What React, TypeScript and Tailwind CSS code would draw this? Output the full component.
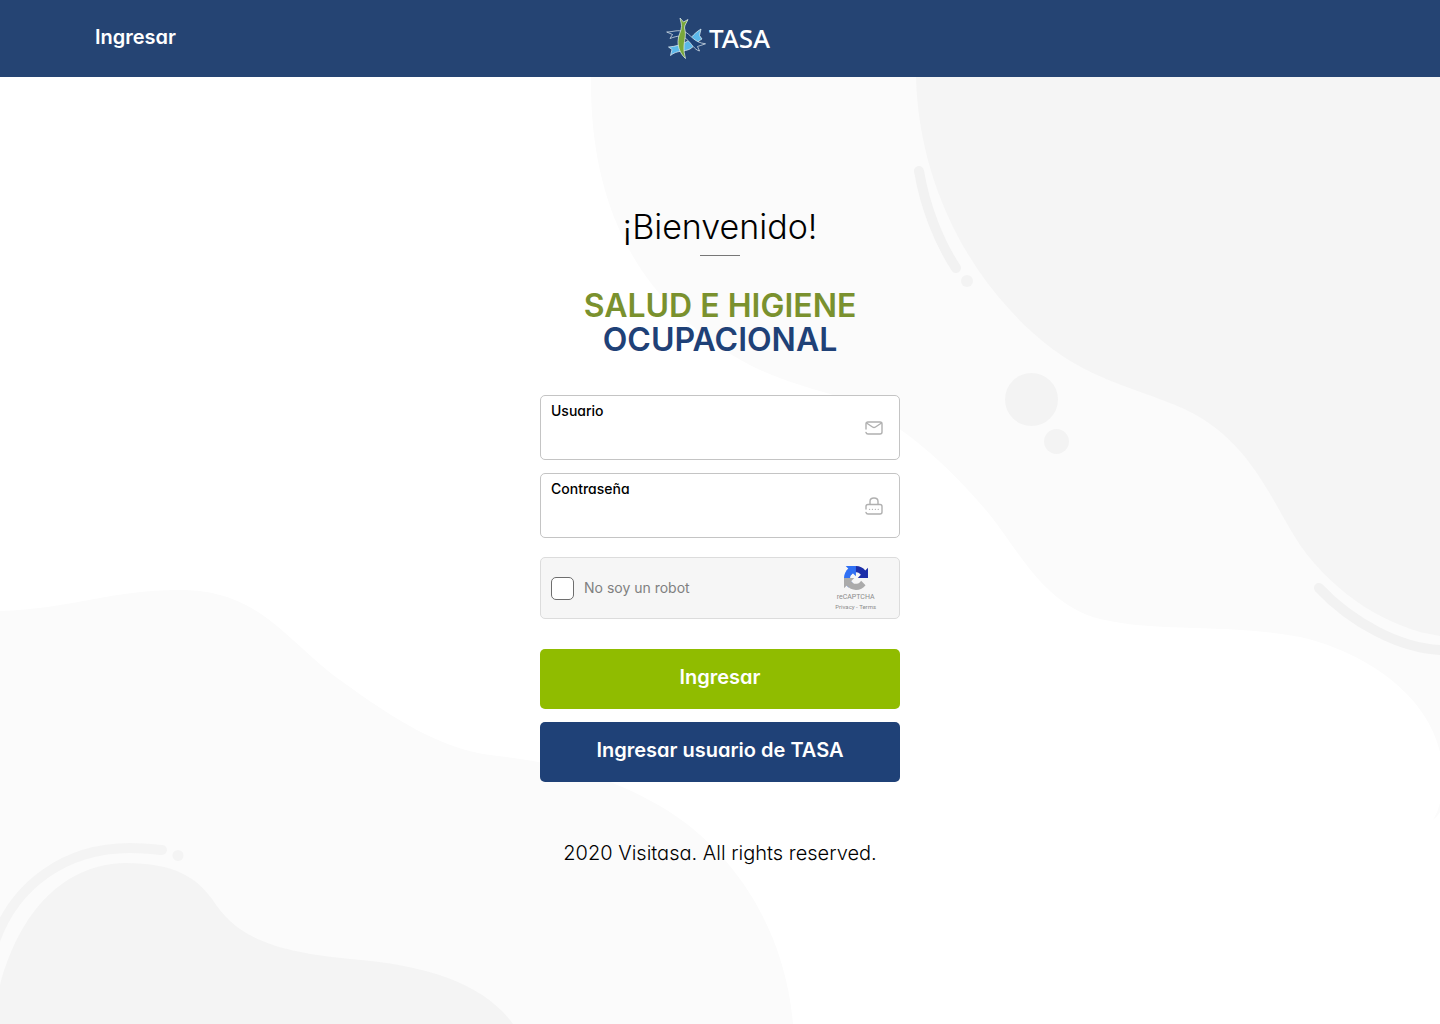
import { useState } from "react";

function Backdrop() {
  return (
    <svg
      aria-hidden="true"
      className="absolute inset-0 -z-10 h-full w-full"
      viewBox="0 77 1440 947"
      preserveAspectRatio="xMidYMid slice"
    >
      <path
        fill="#fbfbfb"
        d="M591 77C590 160 610 250 680 315C740 371 790 382 830 394C900 416 955 473 990 515C1020 553 1045 605 1100 619C1160 633 1225 623 1300 637C1370 653 1428 698 1440 752V77Z"
      />
      <path fill="#fbfbfb" d="M1440 803Q1438 812 1433 820Q1438 816 1440 812Z" />
      <path
        fill="#f5f5f5"
        d="M916 77C918 160 950 245 1010 310C1070 376 1120 382 1175 405C1250 435 1270 500 1300 545C1335 595 1390 629 1440 636V77Z"
      />
      <g fill="none" stroke="#f2f2f2" strokeWidth="10" strokeLinecap="round">
        <path d="M919 171C925 207 939 242 956 268" />
        <path d="M1319 588C1350 621 1400 650 1445 650" />
      </g>
      <g fill="#f3f3f3">
        <circle cx="967" cy="281" r="6" />
        <circle cx="1031.500" cy="399.500" r="26.500" />
        <circle cx="1056.500" cy="441.500" r="12.500" />
      </g>
      <path
        fill="#fbfbfb"
        d="M0 611C70 609 110 590 180 590C260 590 285 640 340 680C395 720 440 748 490 755C560 763 610 777 660 806C735 850 785 930 793 1024H0Z"
      />
      <path
        fill="#f4f4f4"
        d="M0 985C20 910 65 864 125 863C175 863 197 878 212 899C235 934 265 951 350 959C430 965 485 985 513 1024H0Z"
      />
      <path
        d="M-5 941C15 885 65 848 130 848C144 848 152 849 162 850"
        fill="none"
        stroke="#f4f4f4"
        strokeWidth="10"
        strokeLinecap="round"
      />
      <circle cx="178" cy="855.500" r="5.500" fill="#f4f4f4" />
    </svg>
  );
}

function TasaLogo() {
  return (
    <svg role="img" aria-label="TASA" width="108" height="44" viewBox="0 0 108 44">
      <g strokeWidth="0.700" stroke="#e8f0f4" strokeLinejoin="round">
        <path
          fill="#5bb8ea"
          d="M4.500 38.500L6 32.500L2.500 30C10 29.500 15 27.500 20 25C25 22.500 26 17.500 35 12L33.500 18.500L36 22C32 23.500 29 29 24 32C18 35 11 33 4.500 38.500Z"
        />
        <path
          fill="#1d4277"
          d="M0.700 15C7 15 11 12.500 18 14.500C25 17 27 25.500 39.500 26.800C36 28 33 29 31.500 29.500L33.500 34C28 32.500 26 27 21 22.500C16 18 12 18.500 4 21.500L6.500 17.500Z"
        />
        <path
          fill="#79a83b"
          d="M14 1L17.500 5L22 2.500C20.500 6 18.500 8 18.500 11C20.500 18 18.500 22 18 29C17.700 34 18.500 37 19.500 41.500C14.500 37 12 31 12 24.500C12 18 15.500 14 15.500 9.500C15.500 6 14.500 4 14 1Z"
        />
      </g>
      <text x="43" y="31" fill="#fff" fontSize="26" fontFamily="'Noto Sans', sans-serif" fontWeight="500">
        TASA
      </text>
    </svg>
  );
}

function MailIcon() {
  return (
    <svg aria-hidden="true" width="18" height="14" viewBox="0 0 18 14" fill="none" stroke="#b0b0b0" strokeWidth="1.400" strokeLinecap="round" strokeLinejoin="round">
      <path d="M1 8V3Q1 1 3 1H15Q17 1 17 3V11Q17 13 15 13H3Q1.400 13 1 11.500" />
      <path d="M1.500 2L7.500 6Q9 7 10.500 6L16.500 2" />
    </svg>
  );
}

function LockIcon() {
  return (
    <svg aria-hidden="true" width="18" height="18" viewBox="0 0 18 18" fill="none" stroke="#b0b0b0" strokeWidth="1.400" strokeLinecap="round" strokeLinejoin="round">
      <path d="M1 12V9.500Q1 7.500 3 7.500H15Q17 7.500 17 9.500V15Q17 17 15 17H3Q1.400 17 1 15.500" />
      <path d="M5 7V4.500Q5 1 9 1Q13 1 13 4.500V7" />
      <path d="M4.500 12.300H13.600" strokeWidth="1.300" strokeDasharray="0.100 2.800" />
    </svg>
  );
}

function RecaptchaMark() {
  return (
    <svg aria-hidden="true" width="24" height="24" viewBox="0 0 64 64">
      <path
        fill="#1c2fa9"
        d="M64 31.955l-.033-1.370V4.687l-7.160 7.160C50.948 4.674 42.033.093 32.050.093c-10.400 0-19.622 4.960-25.458 12.640l11.736 11.860a15.550 15.550 0 0 1 4.754-5.334c2.050-1.600 4.952-2.906 8.968-2.906.485 0 .860.057 1.135.163 4.976.393 9.288 3.140 11.828 7.124l-8.307 8.307L64 31.953"
      />
      <path
        fill="#2f70f4"
        d="M31.862.094l-1.370.033H4.594l7.160 7.160C4.580 13.147 0 22.060 0 32.046c0 10.400 4.960 19.622 12.640 25.458L24.500 45.768a15.550 15.550 0 0 1-5.334-4.754c-1.600-2.050-2.906-4.952-2.906-8.968 0-.485.057-.860.163-1.135.393-4.976 3.140-9.288 7.124-11.828l8.307 8.307L31.860.095"
      />
      <path
        fill="#ababab"
        d="M.001 32.045l.033 1.370v25.898l7.160-7.160c5.860 7.173 14.774 11.754 24.760 11.754 10.400 0 19.622-4.960 25.458-12.640l-11.736-11.860a15.550 15.550 0 0 1-4.754 5.334c-2.050 1.600-4.952 2.906-8.968 2.906-.485 0-.860-.057-1.135-.163-4.976-.393-9.288-3.140-11.828-7.124l8.307-8.307L0 32.048"
      />
    </svg>
  );
}

export default function App() {
  const [robot, setRobot] = useState(false);
  return (
    <div className="relative isolate flex min-h-screen flex-col overflow-hidden bg-white font-['Inter',sans-serif] text-black [font-feature-settings:'cv11']">
      <header className="grid h-[77px] grid-cols-3 items-center bg-[#254473]">
        <a href="#ingresar" className="ml-[95px] -mt-1 justify-self-start text-xl font-semibold text-white">
          Ingresar
        </a>
        <div className="justify-self-center">
          <TasaLogo />
        </div>
      </header>
      <div className="relative flex-1">
        <Backdrop />
        <main className="mx-auto flex w-full max-w-[360px] flex-col pt-[126px]">
          <h1 className="text-center text-[34px] leading-[48px] font-light">¡Bienvenido!</h1>
          <hr className="mx-auto mt-1 w-10 border-[#777]" />
          <h2 className="mt-[33px] text-center text-[32px] leading-[34px] font-semibold whitespace-nowrap text-[#1f4177]">
            <span className="block text-[#7a912e]">SALUD E HIGIENE</span>
            <span className="block">OCUPACIONAL</span>
          </h2>

          <form className="mt-[38px] flex flex-col" onSubmit={(e) => e.preventDefault()}>
            <div className="flex h-[65px] items-center rounded-[5px] border border-[#c4c4c4] bg-white pr-4">
              <div className="flex flex-1 flex-col self-stretch pt-[5px] pl-2.5">
                <label htmlFor="usuario" className="text-sm font-medium">Usuario</label>
                <input id="usuario" type="text" className="w-full flex-1 bg-transparent text-base outline-none" />
              </div>
              <MailIcon />
            </div>
            <div className="mt-[13px] flex h-[65px] items-center rounded-[5px] border border-[#c4c4c4] bg-white pr-4">
              <div className="flex flex-1 flex-col self-stretch pt-[5px] pl-2.5">
                <label htmlFor="contrasena" className="text-sm font-medium">Contraseña</label>
                <input id="contrasena" type="password" className="w-full flex-1 bg-transparent text-base outline-none" />
              </div>
              <LockIcon />
            </div>

            <div className="mt-[19px] flex h-[62px] items-center rounded-[5px] border border-[#dcdcdc] bg-[#f6f6f6] pr-[23px] pl-2.5">
              <input
                id="robot"
                type="checkbox"
                checked={robot}
                onChange={(e) => setRobot(e.target.checked)}
                className="size-[23px] appearance-none rounded-[5px] border border-[#6e6e6e] bg-white checked:bg-[#1f4177]"
              />
              <label htmlFor="robot" className="ml-2.5 text-sm text-[#808080]">No soy un robot</label>
              <div className="ml-auto flex flex-col items-center font-['Roboto',sans-serif] text-[#8c8c8c]">
                <RecaptchaMark />
                <span className="mt-0.5 text-[7px] leading-[10px]">reCAPTCHA</span>
                <span className="text-[6px] leading-[9px]">Privacy - Terms</span>
              </div>
            </div>

            <button type="submit" className="mt-[30px] h-[60px] rounded-[5px] bg-[#90bc00] pb-1 text-xl font-semibold text-white">
              Ingresar
            </button>
            <button type="button" className="mt-[13px] h-[60px] rounded-[5px] bg-[#1f4177] pb-1 text-xl font-semibold text-white">
              Ingresar usuario de TASA
            </button>
          </form>
          <footer className="mt-[57px] text-center text-xl font-light whitespace-nowrap">2020 Visitasa. All rights reserved.</footer>
        </main>
      </div>
    </div>
  );
}
